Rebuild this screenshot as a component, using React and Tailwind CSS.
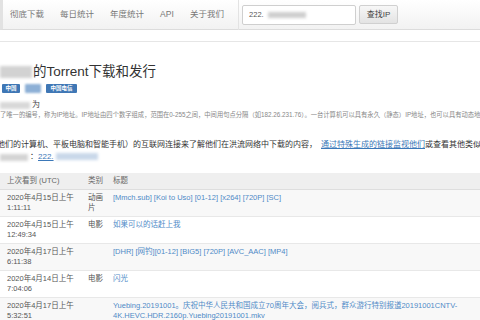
import React from "react";

const rows = [
  { d: "2020年4月15日上午", t: "1:11:11", c: "动画片", title: "[Mmch.sub] [Koi to Uso] [01-12] [x264] [720P] [SC]" },
  { d: "2020年4月15日上午", t: "12:49:34", c: "电影", title: "如果可以的话赶上我" },
  { d: "2020年4月17日上午", t: "6:11:38", c: "", title: "[DHR] [网钓][01-12] [BIG5] [720P] [AVC_AAC] [MP4]" },
  { d: "2020年4月14日上午", t: "7:04:06", c: "电影", title: "闪光" },
  { d: "2020年4月17日上午", t: "5:32:51", c: "", title: "Yuebing.20191001。庆祝中华人民共和国成立70周年大会，阅兵式，群众游行特别报道20191001CNTV-4K.HEVC.HDR.2160p.Yuebing20191001.mkv" },
];

function Blur({ w, h, c = "bg-[#d6d6d6]" }) {
  return <span className={`inline-block align-middle blur-[1.5px] ${c}`} style={{ width: w, height: h }} />;
}

export default function App() {
  return (
    <div className="w-[480px] h-[320px] overflow-hidden bg-white font-['Liberation_Sans','Noto_Sans_CJK_SC',sans-serif] text-[#333]">
      {/* navbar */}
      <div className="h-[30px] flex items-center border-b border-[#dcdcdc] bg-gradient-to-b from-[#ffffff] to-[#f2f2f2] border-l-[3px] border-l-[#e2e2e2]">
        <div className="flex items-center ml-[7px] gap-[16px] text-[8.5px] text-[#777] leading-none">
          <span>彻底下载</span>
          <span>每日统计</span>
          <span>年度统计</span>
          <span className="w-[14px]">API</span>
          <span>关于我们</span>
        </div>
        <div className="ml-[14px] w-px h-[30px] bg-[#e3e3e3]" />
        <div className="ml-[3px] w-[114px] h-[20px] border border-[#cfcfcf] rounded-[2px] bg-white flex items-center pl-[6px] text-[7.5px] text-[#555]">
          <span>222.</span>
          <span className="ml-[4px]"><Blur w={38} h={6} c="bg-[#cfcfcf]" /></span>
        </div>
        <div className="ml-[3px] w-[39px] h-[19px] border border-[#d0d0d0] rounded-[2px] bg-gradient-to-b from-[#f7f7f7] to-[#e3e3e3] flex items-center justify-center text-[8px] text-[#444]">
          查找IP
        </div>
      </div>
      <div className="h-[11px]" />
      <div className="border-t border-[#e6e6e6]" />

      {/* content */}
      <div className="pt-[21px]">
        <div className="flex items-center h-[18px] leading-[18px]">
          <Blur w={32} h={12} c="bg-[#d2d2d2]" />
          <span className="ml-[1px] text-[13.5px] text-[#333]">的Torrent下载和发行</span>
        </div>
        <div className="mt-[3px] flex items-center h-[9px] pl-[2px] text-[5.5px] font-bold text-white leading-none">
          <span className="h-[9px] w-[18px] bg-[#3f77b5] flex items-center justify-center rounded-[1px]">中国</span>
          <span className="ml-[5px] h-[9px] w-[16px] bg-[#8db0d6] blur-[1px] rounded-[1px]" />
          <span className="ml-[5px] h-[9px] w-[31px] bg-[#3f77b5] flex items-center justify-center rounded-[1px]">中国电信</span>
        </div>
        <div className="mt-[7px] flex items-center h-[10px] text-[8px] text-[#444] leading-[10px]">
          <Blur w={30} h={7} c="bg-[#d8d8d8]" />
          <span className="ml-[2px]">为</span>
        </div>
        <div className="mt-[1px] h-[8px] leading-[8px] text-[6.3px] text-[#888] whitespace-nowrap overflow-hidden">
          了唯一的编号，称为IP地址。IP地址由四个数字组成，范围在0-255之间，中间用句点分隔（如182.26.231.76）。一台计算机可以具有永久（静态）IP地址，也可以具有动态地址
        </div>
        <div className="mt-[20px] h-[12px] leading-[12px] text-[8px] text-[#333] whitespace-nowrap overflow-hidden ml-[-3px]">
          他们的计算机、平板电脑和智能手机）的互联网连接来了解他们在洪流网络中下载的内容，
          <span className="ml-[4px] text-[#3b78b8] underline">通过特殊生成的链接监视他们</span>或查看其他类似的
        </div>
        <div className="flex items-center h-[12px] leading-[12px] text-[8px]">
          <Blur w={28} h={7} c="bg-[#d4d4d4]" />
          <span className="ml-[2px] text-[#333]">：</span>
          <span className="text-[#3b78b8] underline">222.</span>
          <span className="ml-[2px]"><Blur w={42} h={7} c="bg-[#c9d8ea]" /></span>
        </div>

        {/* table */}
        <div className="mt-[10px] text-[7.5px]">
          <div className="grid grid-cols-[81px_27px_1fr] h-[17px] items-center bg-[#efefef] text-[#666] border-b border-[#dedede]">
            <span className="pl-[7px]">上次看到 (UTC)</span>
            <span className="pl-[7px]">类别</span>
            <span className="pl-[5px]">标题</span>
          </div>
          {rows.map((r, i) => (
            <div
              key={i}
              className={`grid grid-cols-[81px_27px_1fr] py-[2.5px] leading-[10.5px] border-b border-[#e8e8e8] ${i % 2 === 0 ? "bg-[#f8f8f8]" : "bg-white"}`}
            >
              <div className="pl-[7px] text-[#555]">
                <div>{r.d}</div>
                <div>{r.t}</div>
              </div>
              <div className="pl-[7px] pr-[4px] text-[#555] break-all">{r.c}</div>
              <div className="pl-[5px] pr-[18px] text-[#4f8ac7]">{r.title}</div>
            </div>
          ))}
        </div>
      </div>
    </div>
  );
}
